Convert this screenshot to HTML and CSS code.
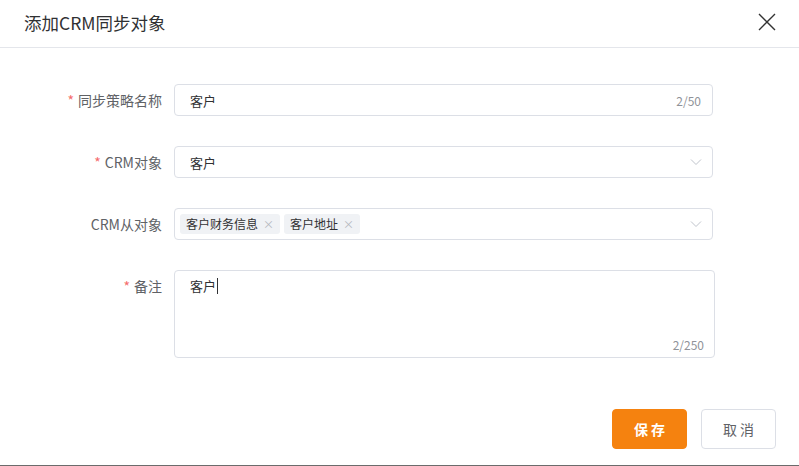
FILE: index.html
```
<!doctype html>
<html>
    <head>
        <meta charset="utf-8">
        <title>添加CRM同步对象</title>
        <link rel="stylesheet" href="styles.css">
    </head>
    <body>
        <div id="dialog">
            <div id="baslik">
                <div id="baslik-metin">添加CRM同步对象</div>
                <svg id="kapat" width="18" height="18" viewBox="0 0 18 18">
                    <path d="M1 1 L17 17 M17 1 L1 17" stroke="#333" stroke-width="1.4" fill="none"/>
                </svg>
            </div>

            <div id="form">
                <div class="satir">
                    <div class="etiket"><span class="yildiz">*</span>同步策略名称</div>
                    <div class="kutu">
                        <span class="deger">客户</span>
                        <span class="sayac">2/50</span>
                    </div>
                </div>
                <div class="satir">
                    <div class="etiket"><span class="yildiz">*</span>CRM对象</div>
                    <div class="kutu">
                        <span class="deger">客户</span>
                        <svg class="ok" width="12" height="8" viewBox="0 0 12 8"><path d="M1 1.5 L6 6.5 L11 1.5" stroke="#c0c4cc" stroke-width="1" fill="none"/></svg>
                    </div>
                </div>
                <div class="satir">
                    <div class="etiket">CRM从对象</div>
                    <div class="kutu kutu-etiketler">
                        <span class="tag">客户财务信息<span class="tag-x">×</span></span>
                        <span class="tag">客户地址<span class="tag-x">×</span></span>
                        <svg class="ok" width="12" height="8" viewBox="0 0 12 8"><path d="M1 1.5 L6 6.5 L11 1.5" stroke="#c0c4cc" stroke-width="1" fill="none"/></svg>
                    </div>
                </div>
                <div class="satir">
                    <div class="etiket"><span class="yildiz">*</span>备注</div>
                    <div class="alan">
                        <span class="deger">客户<span class="imlec"></span></span>
                        <span class="sayac alan-sayac">2/250</span>
                    </div>
                </div>
            </div>

            <div id="alt">
                <button class="btn" id="kaydet">保 存</button>
                <button class="btn" id="iptal">取 消</button>
            </div>
        </div>
    </body>
</html>
```

FILE: styles.css
```
*{
    margin: 0px;
    padding: 0px;
    box-sizing: border-box;
}
body{
    background-color: #ffffff;
    font-family: "Noto Sans CJK SC", "Noto Sans", sans-serif;
    color: #606266;
}
#dialog{
    width: 799px;
    height: 466px;
    border-bottom: 1px solid #6b6b6b;
}
#baslik{
    height: 48px;
    padding: 0px 23px 3px 24px;
    display: flex;
    justify-content: space-between;
    align-items: center;
    border-bottom: 1px solid #e4e6eb;
}
#baslik-metin{
    font-size: 17.5px;
    color: #303133;
}
#form{
    padding-top: 36px;
}
.satir{
    display: flex;
    margin-bottom: 30px;
}
.etiket{
    width: 174px;
    padding-right: 12px;
    text-align: right;
    font-size: 14px;
    line-height: 32px;
    color: #606266;
}
.yildiz{
    color: #f56c6c;
    margin-right: 4px;
}
.kutu{
    width: 539px;
    height: 32px;
    border: 1px solid #dcdfe6;
    border-radius: 4px;
    padding: 0px 15px;
    display: flex;
    align-items: center;
    font-size: 13px;
    color: #303133;
}
.deger{
    flex: 1;
}
.sayac{
    font-size: 12px;
    color: #909399;
    margin-right: -4px;
}
.ok{
    margin-right: -5px;
}
.kutu-etiketler{
    padding-left: 5px;
    gap: 4px;
}
.tag{
    height: 20px;
    line-height: 20px;
    padding: 0px 6px;
    background-color: #f0f2f5;
    border-radius: 3px;
    font-size: 12px;
    color: #303133;
}
.tag-x{
    color: #b4b7bd;
    margin-left: 5px;
    font-size: 11px;
}
.kutu-etiketler .ok{
    margin-left: auto;
}
.alan{
    width: 541px;
    height: 88px;
    border: 1px solid #dcdfe6;
    border-radius: 4px;
    padding: 5px 15px;
    display: flex;
    flex-direction: column;
    font-size: 13px;
    color: #303133;
}
.imlec{
    display: inline-block;
    width: 1px;
    height: 16px;
    background-color: #303133;
    vertical-align: -3px;
    margin-left: 1px;
}
.alan-sayac{
    align-self: flex-end;
    margin-right: -5px;
    margin-top: auto;
    margin-bottom: -1px;
}
#alt{
    display: flex;
    justify-content: flex-end;
    gap: 14px;
    padding-right: 23px;
    padding-top: 21px;
}
.btn{
    width: 75px;
    height: 40px;
    border-radius: 4px;
    font-family: "Noto Sans CJK SC", sans-serif;
    font-size: 14px;
}
#kaydet{
    background-color: #f5820f;
    border: 1px solid #f5820f;
    color: #ffffff;
    font-weight: bold;
}
#iptal{
    background-color: #ffffff;
    border: 1px solid #dcdfe6;
    color: #606266;
}
```
